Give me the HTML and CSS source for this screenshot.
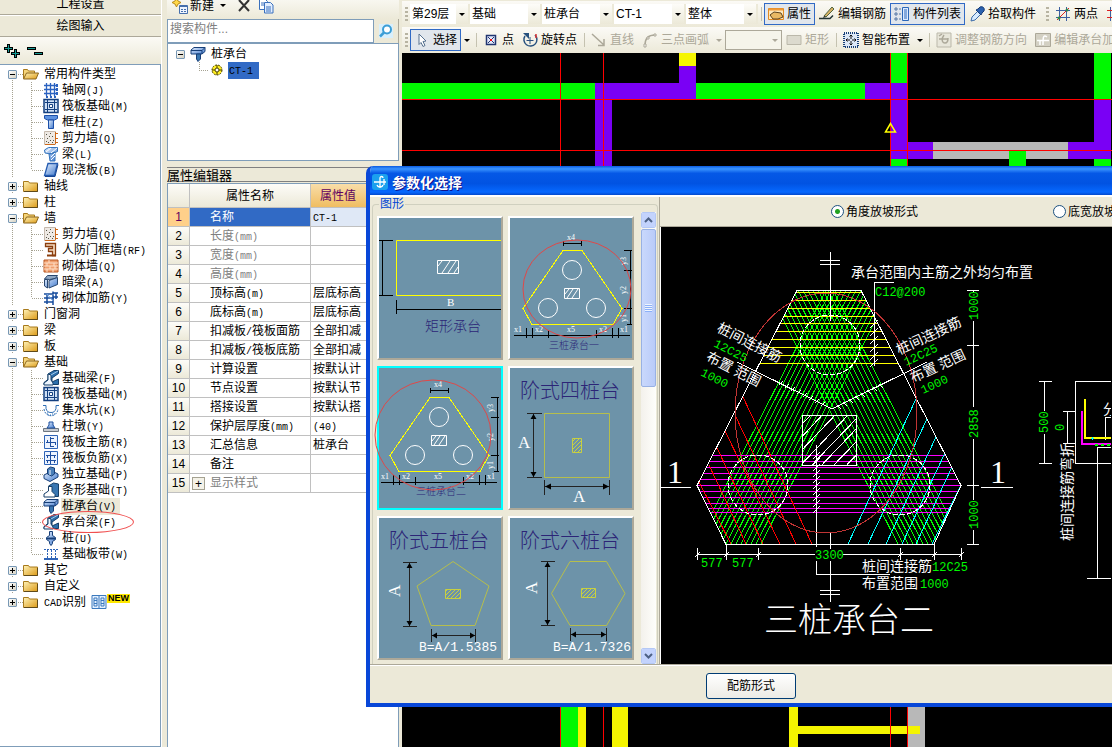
FILE: index.html
```html
<!DOCTYPE html>
<html lang="zh-CN">
<head>
    <meta charset="UTF-8">
    <meta name="viewport" content="width=device-width, initial-scale=1.0">
    <title>参数化选择</title>
    <link rel="stylesheet" href="styles.css">
</head>
<body>
    <!-- icon library -->
    <svg class="defs" aria-hidden="true">
        <defs>
            <linearGradient id="gold" x2="1" y2="1"><stop offset="0" stop-color="#fff3b8"/><stop offset="1" stop-color="#dc9a17"/></linearGradient>
            <linearGradient id="blue" x2="1" y2="1"><stop offset="0" stop-color="#e8f2ff"/><stop offset="1" stop-color="#3f78cc"/></linearGradient>
            <pattern id="hatch" width="4" height="4" patternUnits="userSpaceOnUse"><path d="M-1 5L5 -1M-1 1L1 -1M3 5L5 3" stroke="#c8d040"/></pattern>
        </defs>
        <symbol id="i-folder" viewBox="0 0 16 16"><path d="M.500 3.500h5l1 1.500h8v8.500H.500z" fill="url(#gold)" stroke="#a87a1c"/><path d="M1 13.500h13.500V6" fill="none" stroke="#5f4a1a"/></symbol>
        <symbol id="i-open" viewBox="0 0 16 16"><path d="M.500 12.500v-9h4l1 1.500h6v2" fill="#f5d479" stroke="#a87a1c"/><path d="M3.500 7h12l-2.500 6H.500z" fill="url(#gold)" stroke="#8a651d"/></symbol>
        <symbol id="i-axis" viewBox="0 0 16 16"><path d="M3.500 1v13M7.500 1v13M11.500 1v13M1 3.500h12M1 7.500h12M1 11.500h12" stroke="#2b62c0" fill="none" stroke-width="1.300"/><path d="M13 2h2v3h-2zM13 6h2v3h-2zM13 10h2v3h-2zM3 14h2v2H3zM7 14h2v2H7zM11 14h2v2h-2z" fill="#2b62c0"/></symbol>
        <symbol id="i-raft" viewBox="0 0 16 16"><path d="M1 1.500h14v13H1z" fill="#cfe0f5" stroke="#133f7f" stroke-width="1.500"/><path d="M4.500 2v12M11.500 2v12M2 4.500h12M2 11.500h12" stroke="#133f7f"/><path d="M6.500 6.500h3v3h-3z" fill="#fff" stroke="#133f7f"/></symbol>
        <symbol id="i-col" viewBox="0 0 16 16"><path d="M1.500 1.500h13v3l-3 1.500h-7l-3-1.500z" fill="#5d92e0" stroke="#1c4fa8"/><path d="M5.500 6h5v8.500h-5z" fill="url(#blue)" stroke="#1c4fa8"/></symbol>
        <symbol id="i-wall" viewBox="0 0 16 16"><path d="M1.500 1.500h11v13h-11z" fill="#eee9e4" stroke="#c5b9ad"/><path d="M3 4.500h1M7 3.500h1M9 6.500h1M4 8.500h1M7 10.500h1M3 11.500h1M10 10.500h1M9 12.500h1M5 12.500h1M6 6.500h1" stroke="#554"/><path d="M12.500 2v12M12 3.500h3M12 8.500h3M12 12.500h3M2 14.500h10" stroke="#cf6a1b" fill="none"/></symbol>
        <symbol id="i-beam" viewBox="0 0 16 16"><path d="M1.500 4l4-2.500h9v4L8 8l-6-1zM6 8l6-2v9H7z" fill="url(#blue)" stroke="#3474bd"/><path d="M3 6l5-4M8 7l6-5M8 11l4-4M8 14l4-4" stroke="#fff"/></symbol>
        <symbol id="i-slab" viewBox="0 0 16 16"><path d="M5 1.500h9.500l-3 12H1.500z" fill="url(#blue)" stroke="#245bb0" stroke-width="1.300"/><path d="M2 14.500h10l3-12" stroke="#174593" fill="none"/></symbol>
        <symbol id="i-door" viewBox="0 0 16 16"><path d="M2.500 1.500h10v12h-3v-4h-4v-3h4v-2h-7z" fill="#f3d9be" stroke="#8b3e0e" stroke-width="1.300"/><path d="M4 13.500h9" stroke="#8b3e0e" stroke-width="2"/></symbol>
        <symbol id="i-brick" viewBox="0 0 16 16"><path d="M1 2h14v12H1z" fill="#f0a070" stroke="#b95822"/><path d="M1 5h14M1 8h14M1 11h14M6 2v3M11 5v3M4 5v3M7 8v3M12 8v3M4 11v3M10 11v3" stroke="#ffe0c8"/></symbol>
        <symbol id="i-hbeam" viewBox="0 0 16 16"><path d="M1.500 5l3-3.500h10l-2 3-6 1z" fill="#8ea7c4" stroke="#28466e"/><path d="M1.500 5.500h3v8.500l-3-2zM6 6.500l8.500-3v7L6 14z" fill="url(#blue)" stroke="#28466e"/></symbol>
        <symbol id="i-mas" viewBox="0 0 16 16"><path d="M1 4h9V1.500M4 14V5M10 15V5M1 8h10M10 3h5M10 7h5M13 3v6M1 12h9" stroke="#174c9d" stroke-width="1.500" fill="none"/><path d="M4 4l6 7" stroke="#6da1e2"/></symbol>
        <symbol id="i-fbeam" viewBox="0 0 16 16"><path d="M5 4l6-3.500h4.500v3L9 8v4l6.500-3v5.500H1v-2l4-3z" fill="#2d6fab" stroke="#153f68"/><path d="M5 4l3 1v5l2 3v2H1v-2l4-3z" fill="#eef6ff" stroke="#153f68"/><path d="M8 5l7-4" stroke="#a8cdec"/></symbol>
        <symbol id="i-pit" viewBox="0 0 16 16"><path d="M0 3.500h3v3c1 3 2 4 5 4s4-1 5-4v-3h3" fill="none" stroke="#2e6eb5"/><path d="M1 7c1 9 13 9 14 0M4 11h1M7 13h1M11 12h1M9 12h1M5 13h1" fill="none" stroke="#2e6eb5" stroke-dasharray="2 1"/></symbol>
        <symbol id="i-pier" viewBox="0 0 16 16"><path d="M.500 10.500h15v3H.500z" fill="#c6cbd2" stroke="#6d7680"/><path d="M6 4h4v3l2 3H4l2-3z" fill="url(#blue)" stroke="#1d4e9c"/></symbol>
        <symbol id="i-main" viewBox="0 0 16 16"><path d="M1.500 1.500h13v13h-13z" fill="#edf4ff" stroke="#2f64b7"/><path d="M7.500 3v10M3 8.500h10M4.500 6v3M7 4.500h4M7 12.500h4M12.500 8v3" stroke="#1f4f9f"/></symbol>
        <symbol id="i-neg" viewBox="0 0 16 16"><path d="M1.500 1.500h13v13h-13z" fill="#edf4ff" stroke="#2f64b7"/><path d="M3 5.500h10M3 10.500h10M7.500 2v12M4.500 5v3M11.500 5v3M4.500 10v3M11.500 10v3" stroke="#1f4f9f"/></symbol>
        <symbol id="i-iso" viewBox="0 0 16 16"><path d="M1 9l8-4 6 3v3l-8 4.500-6-3z" fill="url(#blue)" stroke="#173f78"/><path d="M4.500 3l3-2 4 1v6l-3 2-4-2z" fill="#487eb9" stroke="#173f78"/><path d="M7 4v5" stroke="#fff"/></symbol>
        <symbol id="i-strip" viewBox="0 0 16 16"><path d="M5.500 4l5-3 5 1v12.500h-5z" fill="#3976b1" stroke="#173f68"/><path d="M5.500 4.500H9v5l3 3v2.500H1V12l4.500-3z" fill="#fff" stroke="#173f68"/></symbol>
        <symbol id="i-cap" viewBox="0 0 16 16"><path d="M1 4l3-2.500h11v4L12 8H1z" fill="url(#blue)" stroke="#173f78"/><path d="M1 4.500h11l3-3M12 4.500V8" fill="none" stroke="#173f78"/><path d="M6.500 8h4v5L8 15.500 6.500 13z" fill="#3976b1" stroke="#173f78"/></symbol>
        <symbol id="i-pile" viewBox="0 0 16 16"><path d="M6.500 1.500h3v4l3 2v2l-3 2v2L8 15.500 6.500 13.500v-2l-3-2v-2l3-2z" fill="url(#blue)" stroke="#173f78"/><path d="M4 8.500h8" stroke="#173f78" stroke-width="2"/></symbol>
        <symbol id="i-band" viewBox="0 0 16 16"><path d="M1 3.500h14" stroke="#2f64b7" stroke-dasharray="2 1"/><path d="M4.500 4v8M8.500 4v8M12.500 4v8" stroke="#2f64b7" stroke-dasharray="2 1"/><path d="M1 13h14" stroke="#2f64b7" stroke-width="2"/></symbol>
        <symbol id="i-gear" viewBox="0 0 16 16"><circle cx="8" cy="8" r="5" fill="#ffee22" stroke="#4a4100" stroke-dasharray="2 1"/><circle cx="8" cy="8" r="2" fill="#fff" stroke="#4a4100"/><path d="M8 3v3M8 10v3M3 8h3M10 8h3" stroke="#4a4100"/></symbol>
        <symbol id="i-copy" viewBox="0 0 16 16"><path d="M1.500 1.500h6l2 2v8h-8z" fill="#fff" stroke="#3a70bd"/><path d="M6.500 4.500h6l2.500 2.500v8H6.500z" fill="#e2eeff" stroke="#3a70bd"/><path d="M3 5h3M3 7h3M8 9h5M8 11h5M8 13h5" stroke="#3a70bd"/></symbol>
        <symbol id="i-new" viewBox="0 0 16 16"><path d="M4.500 0l1.500 3 3 1.500-3 1.500-1.500 3L3 6 0 4.500 3 3z" fill="#ffd84a" stroke="#b98a18"/><path d="M7.500 7.500h8v8h-8z" fill="#eef4ff" stroke="#466fac"/><path d="M8 8.500h7M9 11.500h2M12 11.500h2M9 13.500h2M12 13.500h2" stroke="#466fac"/></symbol>
        <symbol id="i-prop" viewBox="0 0 16 16"><path d="M.500 2.500h15v11H.500z" fill="#ffe9bb" stroke="#e28a22"/><path d="M1 3.500h14" stroke="#f09a37" stroke-width="2"/><path d="M2 9l4-3 7 1 2 4-5 2H5z" fill="#e9b964" stroke="#5c431e"/></symbol>
        <symbol id="i-edit" viewBox="0 0 16 16"><path d="M0 12.500h11l3-3" fill="none" stroke="#233" stroke-width="1.500"/><path d="M5 10l8-9 2 2-8 8z" fill="#d7b064" stroke="#52663f"/><path d="M4 12l1-2 2 1z" fill="#222"/></symbol>
        <symbol id="i-list" viewBox="0 0 16 16"><path d="M1 2h2v2H1zM1 7h2v2H1zM1 12h2v2H1z" fill="none" stroke="#5476a5"/><path d="M5 3h2M5 8h2M5 13h2" stroke="#5476a5"/><path d="M8.500 1.500h6v13h-6z" fill="#dceaff" stroke="#2b67b9"/><path d="M10 4h3M10 6h3M10 8h3M10 10h3M10 12h3" stroke="#2b67b9"/></symbol>
        <symbol id="i-pick" viewBox="0 0 16 16"><path d="M2 15l1-4 6-6 3 3-6 6z" fill="#d7ebff" stroke="#3d6ca8"/><path d="M7 4l5 5 1-2 2-2c1-3-1-5-4-4L9 3z" fill="#2c62ae" stroke="#173b77"/></symbol>
        <symbol id="i-two" viewBox="0 0 16 16"><path d="M4.500 1v14M11.500 1v14M1 4.500h14M1 11.500h14" stroke="#3c5fa0"/><path d="M2 14L14 2" stroke="#d22"/><circle cx="4" cy="12" r="1.500" fill="#384"/><circle cx="12" cy="4" r="1.500" fill="#384"/></symbol>
        <symbol id="i-par" viewBox="0 0 16 16"><path d="M4.500 1v14M11.500 1v14" stroke="#3c5fa0"/><path d="M1 4.500h14M1 11.500h14" stroke="#d22"/></symbol>
        <symbol id="i-arrow" viewBox="0 0 16 16"><path d="M5 2l7 7-3 .500 2 4-2 1-2-4-2 2z" fill="#fff" stroke="#56718f"/></symbol>
        <symbol id="i-point" viewBox="0 0 16 16"><path d="M3.500 3.500h9v9h-9z" fill="#e2e8fb" stroke="#21356f" stroke-width="1.500"/><path d="M5 5l6 6M11 5l-6 6" stroke="#21356f"/><path d="M7 7h2v2H7z" fill="#e11"/></symbol>
        <symbol id="i-rotate" viewBox="0 0 16 16"><path d="M3 4a6.500 6.500 0 1 0 10-1" fill="none" stroke="#27517e" stroke-width="1.500"/><path d="M1 1h6v6z" fill="#27517e"/><path d="M8 5v7M4.500 8.500h7" stroke="#27517e"/><path d="M14 2v4" stroke="#d33" stroke-width="1.500"/></symbol>
        <symbol id="i-line" viewBox="0 0 16 16"><path d="M1 2l12 11M13 7v6.500H7" fill="none" stroke="#aca899" stroke-width="1.500"/></symbol>
        <symbol id="i-arc" viewBox="0 0 16 16"><path d="M3 13C3 6 6 3 13 3" fill="none" stroke="#aca899" stroke-width="1.500"/><path d="M2 12h2v3H2zM5 5h2v2H5zM12 2h2v2h-2z" fill="#fff" stroke="#aca899"/></symbol>
        <symbol id="i-rect" viewBox="0 0 16 16"><path d="M1 3.500h14v9H1z" fill="#dcdace" stroke="#bbb8aa"/></symbol>
        <symbol id="i-smart" viewBox="0 0 16 16"><path d="M1 1h14v14H1z" fill="#dce8f7" stroke="#173f78" stroke-dasharray="1 1" stroke-width="2"/><path d="M8 3v4M8 9v4M3 8h4M9 8h4M6.500 4.500L8 3l1.500 1.500M6.500 11.500L8 13l1.500-1.500M4.500 6.500L3 8l1.500 1.500M11.500 6.500L13 8l-1.500 1.500" fill="none" stroke="#111"/></symbol>
        <symbol id="i-dir" viewBox="0 0 16 16"><path d="M1 1h14v14H1z" fill="#e8e6da" stroke="#bbb8aa"/><path d="M3 7h9M8 3c-3 4-2 8 1 8s3-3 3-5M3 4l3-2" fill="none" stroke="#aca899" stroke-width="1.500"/></symbol>
        <symbol id="i-capbar" viewBox="0 0 16 16"><path d="M.500 1.500h15v13H.500z" fill="#d3d0c3" stroke="#aca899"/><path d="M2 8.500h12M5 13V8M12 5c-4-3-4 1-4 8" fill="none" stroke="#fff" stroke-width="1.500"/></symbol>
    </svg>

    <div class="app">
        <aside class="sidebar">
            <button class="bar-btn first">工程设置</button>
            <button class="bar-btn">绘图输入</button>
            <div class="fold-tools">
                <button aria-label="全部展开"><svg width="16" height="14"><path d="M0 4.500h9M4.500 0v9M7 9.500h9M11.500 5v9" stroke="#000" stroke-width="3"/><path d="M1 4.500h7M4.500 1v7M8 9.500h7M11.500 6v7" stroke="#169a92"/></svg></button>
                <button aria-label="全部折叠"><svg width="16" height="14"><path d="M0 4.500h9M7 9.500h9" stroke="#000" stroke-width="3"/><path d="M1 4.500h7M8 9.500h7" stroke="#169a92"/></svg></button>
            </div>
            <ul class="tree">
                <li><div class="row"><button class="toggle minus" aria-label="折叠"></button><svg><use href="#i-open"/></svg>常用构件类型</div>
                    <ul>
                        <li><svg><use href="#i-axis"/></svg><span>轴网<i>(J)</i></span></li>
                        <li><svg><use href="#i-raft"/></svg><span>筏板基础<i>(M)</i></span></li>
                        <li><svg><use href="#i-col"/></svg><span>框柱<i>(Z)</i></span></li>
                        <li><svg><use href="#i-wall"/></svg><span>剪力墙<i>(Q)</i></span></li>
                        <li><svg><use href="#i-beam"/></svg><span>梁<i>(L)</i></span></li>
                        <li><svg><use href="#i-slab"/></svg><span>现浇板<i>(B)</i></span></li>
                    </ul>
                </li>
                <li><div class="row"><button class="toggle" aria-label="展开"></button><svg><use href="#i-folder"/></svg>轴线</div></li>
                <li><div class="row"><button class="toggle" aria-label="展开"></button><svg><use href="#i-folder"/></svg>柱</div></li>
                <li><div class="row"><button class="toggle minus" aria-label="折叠"></button><svg><use href="#i-open"/></svg>墙</div>
                    <ul>
                        <li><svg><use href="#i-wall"/></svg><span>剪力墙<i>(Q)</i></span></li>
                        <li><svg><use href="#i-door"/></svg><span>人防门框墙<i>(RF)</i></span></li>
                        <li><svg><use href="#i-brick"/></svg><span>砌体墙<i>(Q)</i></span></li>
                        <li><svg><use href="#i-hbeam"/></svg><span>暗梁<i>(A)</i></span></li>
                        <li><svg><use href="#i-mas"/></svg><span>砌体加筋<i>(Y)</i></span></li>
                    </ul>
                </li>
                <li><div class="row"><button class="toggle" aria-label="展开"></button><svg><use href="#i-folder"/></svg>门窗洞</div></li>
                <li><div class="row"><button class="toggle" aria-label="展开"></button><svg><use href="#i-folder"/></svg>梁</div></li>
                <li><div class="row"><button class="toggle" aria-label="展开"></button><svg><use href="#i-folder"/></svg>板</div></li>
                <li><div class="row"><button class="toggle minus" aria-label="折叠"></button><svg><use href="#i-open"/></svg>基础</div>
                    <ul>
                        <li><svg><use href="#i-fbeam"/></svg><span>基础梁<i>(F)</i></span></li>
                        <li><svg><use href="#i-raft"/></svg><span>筏板基础<i>(M)</i></span></li>
                        <li><svg><use href="#i-pit"/></svg><span>集水坑<i>(K)</i></span></li>
                        <li><svg><use href="#i-pier"/></svg><span>柱墩<i>(Y)</i></span></li>
                        <li><svg><use href="#i-main"/></svg><span>筏板主筋<i>(R)</i></span></li>
                        <li><svg><use href="#i-neg"/></svg><span>筏板负筋<i>(X)</i></span></li>
                        <li><svg><use href="#i-iso"/></svg><span>独立基础<i>(P)</i></span></li>
                        <li><svg><use href="#i-strip"/></svg><span>条形基础<i>(T)</i></span></li>
                        <li><svg><use href="#i-cap"/></svg><span class="current">桩承台<i>(V)</i></span></li>
                        <li class="marked"><svg><use href="#i-fbeam"/></svg><span>承台梁<i>(F)</i></span></li>
                        <li><svg><use href="#i-pile"/></svg><span>桩<i>(U)</i></span></li>
                        <li><svg><use href="#i-band"/></svg><span>基础板带<i>(W)</i></span></li>
                    </ul>
                </li>
                <li><div class="row"><button class="toggle" aria-label="展开"></button><svg><use href="#i-folder"/></svg>其它</div></li>
                <li><div class="row"><button class="toggle" aria-label="展开"></button><svg><use href="#i-folder"/></svg>自定义</div></li>
                <li><div class="row"><button class="toggle" aria-label="展开"></button><svg><use href="#i-folder"/></svg><span><i>CAD</i>识别</span><svg viewBox="0 0 16 16"><path d="M1 1.500h14v13H1zM8 2v12" fill="#e3f0ff" stroke="#3b79bd"/><path d="M3 4h3v8H3zM10 4h3v8h-3zM3 6.500h3M3 9.500h3M10 6.500h3M10 9.500h3" fill="none" stroke="#3b79bd"/></svg><b class="new">NEW</b></div></li>
            </ul>
        </aside>

        <section class="middle">
            <div class="mid-tools">
                <button><svg><use href="#i-new"/></svg>新建<span class="caret"></span></button>
                <button aria-label="删除"><svg viewBox="0 0 16 16"><path d="M3 2l10 11M13 2L3 13" stroke="#333" stroke-width="2"/></svg></button>
                <button aria-label="复制"><svg><use href="#i-copy"/></svg></button>
            </div>
            <div class="search">
                <input type="text" placeholder="搜索构件..." aria-label="搜索构件">
                <button aria-label="搜索"><svg viewBox="0 0 16 16"><path d="M1 1h14v14H1z" fill="#d8effc"/><circle cx="9" cy="6.500" r="4" fill="#fff" stroke="#3c9ed6" stroke-width="2"/><path d="M6 9.500l-4 4" stroke="#3c9ed6" stroke-width="2.500"/></svg></button>
            </div>
            <ul class="parts">
                <li><button class="toggle minus" aria-label="折叠"></button><svg><use href="#i-cap"/></svg>桩承台</li>
                <li class="part"><svg><use href="#i-gear"/></svg><span><i>CT-1</i></span></li>
            </ul>
            <h2>属性编辑器</h2>
            <div class="grid-box">
                <table>
                    <thead>
                        <tr><th class="num"></th><th class="name">属性名称</th><th class="val">属性值</th></tr>
                    </thead>
                    <tbody>
                        <tr class="sel"><th>1</th><td>名称</td><td><i>CT-1</i></td></tr>
                        <tr class="off"><th>2</th><td>长度<i>(mm)</i></td><td></td></tr>
                        <tr class="off"><th>3</th><td>宽度<i>(mm)</i></td><td></td></tr>
                        <tr class="off"><th>4</th><td>高度<i>(mm)</i></td><td></td></tr>
                        <tr><th>5</th><td>顶标高<i>(m)</i></td><td>层底标高</td></tr>
                        <tr><th>6</th><td>底标高<i>(m)</i></td><td>层底标高</td></tr>
                        <tr><th>7</th><td>扣减板<i>/</i>筏板面筋</td><td>全部扣减</td></tr>
                        <tr><th>8</th><td>扣减板<i>/</i>筏板底筋</td><td>全部扣减</td></tr>
                        <tr><th>9</th><td>计算设置</td><td>按默认计</td></tr>
                        <tr><th>10</th><td>节点设置</td><td>按默认节</td></tr>
                        <tr><th>11</th><td>搭接设置</td><td>按默认搭</td></tr>
                        <tr><th>12</th><td>保护层厚度<i>(mm)</i></td><td><i>(40)</i></td></tr>
                        <tr><th>13</th><td>汇总信息</td><td>桩承台</td></tr>
                        <tr><th>14</th><td>备注</td><td></td></tr>
                        <tr class="off more"><th>15</th><td><button aria-label="展开显示样式">+</button>显示样式</td><td></td></tr>
                    </tbody>
                </table>
            </div>
        </section>

        <main class="work">
            <div class="toolbar">
                <span class="grip"></span>
                <span class="combo short"><select aria-label="楼层"><option>第29层</option></select></span>
                <span class="combo"><select aria-label="类别"><option>基础</option></select></span>
                <span class="combo"><select aria-label="构件类型"><option>桩承台</option></select></span>
                <span class="combo"><select aria-label="构件"><option>CT-1</option></select></span>
                <span class="combo"><select aria-label="范围"><option>整体</option></select></span>
                <span class="sep"></span>
                <button class="on"><svg><use href="#i-prop"/></svg>属性</button>
                <button><svg><use href="#i-edit"/></svg>编辑钢筋</button>
                <button class="on"><svg><use href="#i-list"/></svg>构件列表</button>
                <button><svg><use href="#i-pick"/></svg>拾取构件</button>
                <span class="grip"></span>
                <button><svg><use href="#i-two"/></svg>两点</button>
                <button aria-label="平行"><svg><use href="#i-par"/></svg></button>
            </div>
            <div class="toolbar">
                <span class="grip"></span>
                <button class="on"><svg><use href="#i-arrow"/></svg>选择</button>
                <button class="drop" aria-label="选择方式"><span class="caret"></span></button>
                <span class="sep"></span>
                <button><svg><use href="#i-point"/></svg>点</button>
                <button><svg><use href="#i-rotate"/></svg>旋转点</button>
                <span class="sep"></span>
                <button disabled><svg><use href="#i-line"/></svg>直线</button>
                <button disabled><svg><use href="#i-arc"/></svg>三点画弧</button>
                <button class="drop" disabled aria-label="画弧方式"><span class="caret"></span></button>
                <span class="combo short off"><select disabled aria-label="半径"><option></option></select></span>
                <button disabled><svg><use href="#i-rect"/></svg>矩形</button>
                <span class="sep"></span>
                <button><svg><use href="#i-smart"/></svg>智能布置</button>
                <button class="drop" aria-label="布置方式"><span class="caret"></span></button>
                <span class="sep"></span>
                <button disabled><svg><use href="#i-dir"/></svg>调整钢筋方向</button>
                <button disabled><svg><use href="#i-capbar"/></svg>编辑承台加筋</button>
            </div>
            <div class="canvas">
                <svg width="710" height="694" viewBox="402 53 710 694" shape-rendering="crispEdges">
                    <path fill="#00f800" d="M402 83h193v16H402zM696 83h169v16H696zM891 53h16v30h-16zM891 159h16v20h-16zM1094 53h17v46h-17zM1094 159h17v20h-17zM561 690h17v57h-17z"/>
                    <path fill="#b8b8b8" d="M933 142h135v17H933zM907 690h18v57h-18z"/>
                    <path fill="#00f800" d="M1009 151h17v20h-17z"/>
                    <path fill="#7a00f5" d="M679 66h17v33h-84v80h-17V83h84zM865 83h42v59h26v17h-42V99h-26zM1094 99h17v60h-43v-17h26z"/>
                    <path fill="#f5f500" d="M679 53h17v13h-17zM578 690h8v57h-8zM612 690h16v57h-16zM789 690h9v36h122v8H798v13h-9z"/>
                    <path stroke="#f00" d="M560.500 53v694M603.500 53v694M890.500 53v694M907.500 53v694M402 99.500h710M402 150.500h710"/>
                    <path stroke="#ff0" fill="none" d="M890.500 123.500l-5 8.500h10z" stroke-width="1.500" shape-rendering="auto"/>
                </svg>
            </div>
        </main>
    </div>

    <div class="dialog" role="dialog" aria-labelledby="dialog-title">
        <header>
            <svg width="16" height="16" viewBox="0 0 16 16"><rect width="16" height="16" rx="3" fill="#1ba0ee"/><path d="M2 8h12M8 4v9M5 11c1 3 5 3 6 0M8 4c0-2 3-2 3 0M12 5v6" fill="none" stroke="#fff" stroke-width="1.300"/></svg>
            <h1 id="dialog-title">参数化选择</h1>
        </header>
        <div class="dialog-body">
            <fieldset>
                <legend>图形</legend>
                <div class="picker">
                    <div class="thumbs">
                        <button class="thumb" aria-label="矩形承台">
                            <svg width="122" height="140">
                                <path d="M17.500 22.500h110v55h-110z" fill="none" stroke="#ff0"/>
                                <path d="M0 22.500h14M0 77.500h14M3.500 22v55M17.500 82v14M17.500 91.500H122" stroke="#000"/>
                                <path d="M58.500 42.500h21v13h-21zM59 48l4-5M63 55l8-12M69 55l8-12M75 55l4-6" fill="none" stroke="#fff"/>
                                <text x="68" y="88" class="dim">B</text>
                                <text x="46" y="113" class="cap14">矩形承台</text>
                            </svg>
                        </button>
                        <button class="thumb" aria-label="三桩承台一">
                            <svg width="122" height="140">
                                <g id="three">
                                    <path d="M53 32.500h19l40 58-9 16H22l-9-16z" fill="none" stroke="#ff0" shape-rendering="crispEdges"/>
                                    <g fill="none" stroke="#fff"><circle cx="62" cy="52" r="9.500"/><circle cx="38" cy="90" r="9.500"/><circle cx="86" cy="90" r="9.500"/><path d="M54.500 70.500h15v10h-15zM55 76l4-5M57 80l6-9M62 80l6-9"/></g>
                                    <path d="M53 25.500h19M53.500 23v5M71.500 23v5M120.500 32v74M114 32.500h8M114 52.500h8M114 90.500h8M117 106.500h5M4 117.500h116M16.500 110v10M22.500 110v10M38.500 112v8M86.500 112v8M102.500 110v10M108.500 110v10" stroke="#000" shape-rendering="crispEdges"/>
                                    <g class="tiny"><text x="57" y="22">x4</text><text x="4" y="114">x1</text><text x="25" y="114">x2</text><text x="57" y="114">x5</text><text x="89" y="114">x2</text><text x="110" y="114">x1</text><text transform="translate(116 47) rotate(-90)">y3</text><text transform="translate(116 76) rotate(-90)">y2</text><text transform="translate(116 104) rotate(-90)">y1</text></g>
                                </g>
                                <text x="39" y="131" class="cap10">三桩承台一</text>
                                <ellipse cx="67" cy="71" rx="54" ry="49" class="mark"/>
                            </svg>
                        </button>
                        <button class="thumb chosen" aria-label="三桩承台二">
                            <svg width="122" height="140">
                                <use href="#three" x="-2" y="-3"/>
                                <text x="37" y="127" class="cap10">三桩承台二</text>
                                <ellipse cx="54" cy="67" rx="58" ry="55" class="mark"/>
                            </svg>
                        </button>
                        <button class="thumb" aria-label="阶式四桩台">
                            <svg width="122" height="140">
                                <text x="10" y="30" class="cap20">阶式四桩台</text>
                                <path d="M34.500 45.500h65v64h-65z" class="olive"/><path d="M62.500 70.500h9v14h-9z" class="olive hatched"/>
                                <path d="M17 45.500h15M17 109.500h15M23.500 46v63M34.500 112v15M99.500 112v15M35 118.500h64" stroke="#222"/>
                                <path d="M23.500 46l3 5h-6zM23.500 109l3-5h-6zM35 118.500l6-3v6zM99 118.500l-6-3v6z"/>
                                <text x="8" y="80" class="dim big">A</text><text x="63" y="134" class="dim big">A</text>
                            </svg>
                        </button>
                        <button class="thumb" aria-label="阶式五桩台">
                            <svg width="122" height="140">
                                <text x="10" y="30" class="cap20">阶式五桩台</text>
                                <path d="M74 43.500l36 24.500-14 39.500H52L38 68z" class="olive"/><path d="M66.500 71.500h15v9h-15z" class="olive hatched"/>
                                <path d="M24 44.500h14M24 108.500h14M30.500 45v63M52.500 111v13M96.500 111v13M53 117.500h43" stroke="#222"/>
                                <path d="M30.500 45l3 5h-6zM30.500 108l3-5h-6zM53 117.500l5-3v6zM96 117.500l-5-3v6z"/>
                                <text transform="translate(21 79) rotate(-90)" class="dim big">A</text>
                                <text x="40" y="133" class="formula">B=A/1.5385</text>
                            </svg>
                        </button>
                        <button class="thumb" aria-label="阶式六桩台">
                            <svg width="122" height="140">
                                <text x="10" y="30" class="cap20">阶式六桩台</text>
                                <path d="M60 43.500h36.500l18.500 32-18.500 32H60l-18.500-32z" class="olive"/><path d="M71.500 70.500h14v9h-14z" class="olive hatched"/>
                                <path d="M31 43.500h14M31 107.500h14M37.500 44v63M60.500 110v13M96.500 110v13M61 116.500h35" stroke="#222"/>
                                <path d="M37.500 44l3 5h-6zM37.500 107l3-5h-6zM61 116.500l5-3v6zM96 116.500l-5-3v6z"/>
                                <text transform="translate(27 76) rotate(-90)" class="dim big">A</text>
                                <text x="43" y="133" class="formula">B=A/1.7326</text>
                            </svg>
                        </button>
                    </div>
                    <div class="scroll">
                        <button aria-label="向上"><svg width="9" height="6"><path d="M1 5l3.500-3.500L8 5" fill="none" stroke="#4d6185" stroke-width="2"/></svg></button>
                        <div class="handle"></div>
                        <button class="down" aria-label="向下"><svg width="9" height="6"><path d="M1 1l3.500 3.500L8 1" fill="none" stroke="#4d6185" stroke-width="2"/></svg></button>
                    </div>
                </div>
            </fieldset>
            <div class="preview">
                <div class="modes">
                    <label><input type="radio" name="slope" checked>角度放坡形式</label>
                    <label><input type="radio" name="slope">底宽放坡形式</label>
                </div>
                <div class="drawing">
                    <svg width="451" height="437" viewBox="661 227 451 437">
                        <defs>
                            <clipPath id="outline"><path d="M798 290h64l100 195-27 59H727l-29-59z"/></clipPath>
                            <clipPath id="column"><path d="M803 415h54v50h-54z"/></clipPath>
                        </defs>
                        <g clip-path="url(#outline)" fill="none">
                            <!-- bars between piles -->
                            <path id="bars" stroke="#00ff00" d="M827 290l-130 254M832 290l-130 254M837 290l-130 254M842 290l-130 254M847 290l-130 254M852 290l-130 254M857 290l-130 254M862 290l-130 254M867 290l-130 254M872 290l-130 254M877 290l-130 254M882 290l-130 254M887 290l-130 254M892 290l-130 254"/>
                            <use href="#bars" transform="translate(1661) scale(-1 1)"/>
                            <path stroke="#f0f" d="M690 455.500h280M690 461.500h280M690 467.500h280M690 473.500h280M690 479.500h280M690 485.500h280M690 491.500h280M690 497.500h280M690 503.500h280M690 508.500h280M690 512.500h280"/>
                            <path stroke="#ff0" d="M740 292.500h180M740 300.500h180M740 308.500h180M740 316.500h180M740 323.500h180M740 331.500h180M740 339.500h180M740 347.500h180M740 355.500h180M740 363.500h180"/>
                            <path stroke="red" d="M744 397l69 147M736 415l61 129M726 431l55 113M718 448l46 96M710 465l37 79M700 482l32 62"/>
                            <path stroke="#0ff" d="M917 399l-68 145M928 419l-59 125M937 437l-50 107M946 453l-43 91M953 467l-36 77M962 485l-29 59"/>
                        </g>
                        <g fill="none" stroke="#fff">
                            <path d="M798 290.500h64l100 195-27 59H727l-29-59z"/>
                            <g stroke-dasharray="5 2"><circle cx="831" cy="345" r="30"/><circle cx="759" cy="485" r="30"/><circle cx="901" cy="485" r="30"/></g>
                            <path d="M803.500 415.500h54v50h-54z"/>
                            <path clip-path="url(#column)" d="M800 427l14-14M800 440l26-28M800 453l40-42M800 467l50-53M808 470l52-54M818 470l42-44M830 470l30-31M843 470l20-21"/>
                            <path d="M738 362l95 47 95-47"/>
                            <path d="M780 385l4-4M786 388l4-4M792 391l4-4M798 394l4-4M804 397l4-4M810 400l4-4M816 403l4-4M822 406l4-4M838 405l4 4M844 402l4 4M850 399l4 4M856 396l4 4M862 393l4 4M868 390l4 4M874 387l4 4M880 384l4 4"/>
                            <path d="M831.500 252v69M821 260.500h20M821 264.500h20M831.500 533v16M831.500 561v41M821 590.500h20M821 594.500h20"/>
                            <path d="M895 282.500h-19.500V366M817.500 445v102M817.500 561v13.500H891"/>
                            <path d="M871 328l8-8M871 336l8-8M871 344l8-8M871 352l8-8M871 360l8-8M871 367l8-8M814 459l7-7M814 465l7-7M814 471l7-7M814 477l7-7M814 483l7-7M814 489l7-7M814 495l7-7M814 501l7-7M814 507l7-7M814 513l7-7"/>
                            <path d="M698 554.500h118M844 554.500h118M698.500 548v12M727.500 544v16M759.500 548v12M901.500 548v12M935.500 544v16M962.500 548v12M696 557l5-5M725 557l5-5M757 557l5-5M899 557l5-5M933 557l5-5M960 557l5-5"/>
                            <path d="M974.500 290v2M974.500 321v86M974.500 439v61M974.500 530v15M968 290.500h12M968 345.500h12M968 485.500h12M968 544.500h12"/>
                            <path d="M661 487.500h31M982 487.500h32M661.500 227v437"/>
                            <path d="M1045.500 381v30M1045.500 434v30M1040 381.500h13M1040 463.500h13M1112 381.500h-35.500v82h40M1068.500 411v33M1064 411.500h12M1064 443.500h12M1106.500 440v-22.500h8M1098.500 578V447.500h20M1088 578.500h24"/>
                        </g>
                        <path d="M1082.500 411v32.500H1112" fill="none" stroke="#f0f" stroke-width="2"/>
                        <path d="M1086 399v38.500h26" fill="none" stroke="#ff0" stroke-width="2"/>
                        <path d="M1093 437v3M1092 438.500h3" stroke="#0ff"/><path d="M1096 444.500h3M1102 444.500h3M1108 444.500h3" stroke="#0f0" stroke-width="2"/>
                        <ellipse cx="827" cy="413" rx="91" ry="120" class="mark dark"/>
                        <g class="note">
                            <text x="852" y="277">承台范围内主筋之外均匀布置</text>
                            <text x="863" y="571">桩间连接筋</text><text x="863" y="588">布置范围</text>
                            <text transform="translate(717 331) rotate(27)">桩间连接筋</text><text transform="translate(706 360) rotate(27)">布置 范围</text>
                            <text transform="translate(900 355) rotate(-25)">桩间连接筋</text><text transform="translate(914 383) rotate(-25)">布置 范围</text>
                            <text transform="translate(1073 541) rotate(-90)">桩间连接筋弯折</text>
                            <text x="1104" y="414">分布筋</text>
                        </g>
                        <g class="measure">
                            <text x="876" y="296">C12@200</text>
                            <text x="933" y="571">12C25</text><text x="921" y="588">1000</text>
                            <text x="702" y="567">577</text><text x="733" y="567">577</text><text x="816" y="559">3300</text>
                            <text transform="translate(714 346) rotate(27)">12C25</text><text transform="translate(701 375) rotate(27)">1000</text>
                            <text transform="translate(907 366) rotate(-25)">12C25</text><text transform="translate(924 394) rotate(-25)">1000</text>
                            <text transform="translate(979 320) rotate(-90)">1000</text><text transform="translate(979 438) rotate(-90)">2858</text><text transform="translate(979 529) rotate(-90)">1000</text>
                            <text transform="translate(1049 433) rotate(-90)">500</text><text transform="translate(1065 431) rotate(-90)">0</text>
                        </g>
                        <g class="section-no"><text x="668" y="483">1</text><text x="991" y="483">1</text></g>
                        <text x="765" y="632" class="big-title">三桩承台二</text>
                    </svg>
                </div>
            </div>
        </div>
        <footer><button>配筋形式</button></footer>
    </div>
</body>
</html>
```
FILE: styles.css
```css
* {
    box-sizing: border-box;
}

body {
    margin: 0;
    height: 100vh;
    overflow: hidden;
    position: relative;
    background: #ece9d8;
    color: #000;
    font: 12px/16px "Liberation Sans", "Noto Sans CJK SC", sans-serif;
}

button, input, select {
    font: inherit;
    color: inherit;
    margin: 0;
}

button {
    display: flex;
    align-items: center;
    padding: 0;
    border: 0;
    background: none;
    white-space: nowrap;
}

ul {
    list-style: none;
    margin: 0;
    padding: 0;
}

i {
    font: 10px/14px "Liberation Mono", monospace;
}

.defs {
    position: absolute;
    width: 0;
    height: 0;
}

.app {
    display: flex;
    height: 100%;
}

.app svg:not([width]) {
    width: 16px;
    height: 16px;
    flex: none;
}

/* left navigation */
.sidebar {
    flex: none;
    width: 162px;
    display: flex;
    flex-direction: column;
    border-right: 1px solid #fff;
}

.bar-btn {
    flex: none;
    height: 22px;
    justify-content: center;
    border-top: 1px solid #fff;
    border-bottom: 1px solid #aca899;
}

.bar-btn.first {
    height: 15px;
    border-top: 0;
    padding-bottom: 6px;
}

.fold-tools {
    flex: none;
    height: 27px;
    display: flex;
    gap: 7px;
    padding-left: 4px;
    background: linear-gradient(#fbfaf5, #ece9d8);
}

.tree {
    flex: 1;
    padding-top: 1px;
    background: #fff;
    border: 1px solid #7f9db9;
    border-left: 0;
    overflow: hidden;
}

.tree > li {
    background: repeating-linear-gradient(#a5a291 0 1px, transparent 1px 2px) 12px 8px / 1px 100% no-repeat;
}

.tree > li:last-child {
    background: none;
}

.row {
    display: flex;
    align-items: center;
    gap: 5px;
    height: 16px;
    padding-left: 8px;
    white-space: nowrap;
    background: repeating-linear-gradient(90deg, #a5a291 0 1px, transparent 1px 2px) 18px 8px / 5px 1px no-repeat;
}

.row .toggle {
    margin-right: 1px;
}

.toggle {
    flex: none;
    width: 9px;
    height: 9px;
    border: 1px solid #7898b5;
    border-radius: 1px;
    background: linear-gradient(#000, #000) center / 5px 1px no-repeat, linear-gradient(#000, #000) center / 1px 5px no-repeat, linear-gradient(135deg, #fff, #d6d2c2);
}

.toggle.minus {
    background: linear-gradient(#000, #000) center / 5px 1px no-repeat, linear-gradient(135deg, #fff, #d6d2c2);
}

.tree ul {
    background: repeating-linear-gradient(#a5a291 0 1px, transparent 1px 2px) 31px 0 / 1px calc(100% - 8px) no-repeat;
}

.tree ul li {
    display: flex;
    align-items: center;
    gap: 2px;
    height: 16px;
    padding-left: 43px;
    white-space: nowrap;
    position: relative;
    background: repeating-linear-gradient(90deg, #a5a291 0 1px, transparent 1px 2px) 32px 8px / 11px 1px no-repeat;
}

.tree ul span {
    padding: 0 4px 0 1px;
}

.tree .current {
    background: #ece9d8;
}

.marked::after {
    content: "";
    position: absolute;
    left: 42px;
    top: -3px;
    width: 90px;
    height: 20px;
    border: 1px solid #f05050;
    border-radius: 50%;
}

.new {
    align-self: flex-start;
    height: 9px;
    padding: 0 1px;
    background: #ffe800;
    font: bold 9px/9px "Liberation Sans", sans-serif;
}

.row svg + .new {
    margin-left: -5px;
}

/* component list and properties */
.middle {
    flex: none;
    width: 240px;
    padding: 0 3px 0 5px;
    display: flex;
    flex-direction: column;
}

.mid-tools {
    display: flex;
    gap: 6px;
    height: 19px;
    padding: 0 0 8px 5px;
    background: linear-gradient(#f8f7f0, #ece9d8);
}

.mid-tools button {
    gap: 2px;
}

.caret {
    flex: none;
    border: 3px solid transparent;
    border-top-color: #000;
    border-bottom: 0;
    margin: 0 4px;
}

:disabled .caret {
    border-top-color: #aca899;
}

.search {
    display: flex;
    height: 24px;
}

.search input {
    width: 0;
    flex: 1;
    padding: 0 2px 4px;
    border: 1px solid #7f9db9;
    background: #fff;
}

.search input::placeholder {
    color: #808080;
}

.search button {
    width: 25px;
    justify-content: center;
    border-right: 1px solid #aca899;
}

.parts {
    height: 118px;
    padding: 2px 0 0 8px;
    border: 1px solid #7f9db9;
    background: #fff;
}

.parts li {
    display: flex;
    align-items: center;
    gap: 5px;
    height: 16px;
}

.parts li.part {
    padding-left: 33px;
    gap: 3px;
    background: repeating-linear-gradient(#a5a291 0 1px, transparent 1px 2px) 23px 0 / 1px 8px no-repeat, repeating-linear-gradient(90deg, #a5a291 0 1px, transparent 1px 2px) 23px 8px / 10px 1px no-repeat;
}

.parts span {
    padding: 0 6px 0 1px;
    background: #316ac5;
}

.middle h2 {
    margin: 6px 0 1px;
    font: 13px/13px "Noto Sans CJK SC", sans-serif;
    border-top: 1px solid #808080;
    border-bottom: 1px solid #808080;
    height: 15px;
}

.grid-box {
    flex: 1;
    background: #fff;
    border: 1px solid #7f9db9;
    border-bottom: 0;
}

table {
    width: 100%;
    table-layout: fixed;
    border-collapse: separate;
    border-spacing: 0;
}

th, td {
    height: 19px;
    padding: 0;
    border-right: 1px solid #c0c0c0;
    border-bottom: 1px solid #c0c0c0;
    font-weight: normal;
    line-height: 16px;
    text-align: left;
    white-space: nowrap;
    overflow: hidden;
}

th {
    text-align: center;
    background: linear-gradient(#fdfcf8, #ece9d8);
}

thead th {
    height: 24px;
}

.num {
    width: 22px;
}

.name {
    width: 121px;
}

.val {
    padding-right: 32px;
    background: linear-gradient(#f8dda9, #f0bd61);
    color: #600060;
}

td:nth-child(2) {
    padding-left: 20px;
}

td:nth-child(3) {
    padding-left: 2px;
}

.sel th {
    background: #ffd08a;
    color: #600060;
}

.sel td {
    background: #dfe8f6;
}

.sel td:nth-child(2) {
    background: #316ac5;
    color: #fff;
}

.off td {
    color: #808080;
}

.more td:nth-child(2) {
    padding-left: 2px;
}

.more button {
    display: inline-block;
    width: 13px;
    height: 13px;
    margin-right: 5px;
    border: 1px solid #a5a291;
    background: #f4f2e8;
    color: #000;
    line-height: 10px;
    vertical-align: middle;
}

/* toolbars and canvas */
.work {
    flex: 1;
    min-width: 0;
    display: flex;
    flex-direction: column;
    padding-top: 1px;
    overflow: hidden;
}

.toolbar {
    flex: none;
    display: flex;
    align-items: center;
    height: 26px;
    background: linear-gradient(#fbfaf6, #ece9d8);
}

.grip {
    flex: none;
    width: 3px;
    height: 14px;
    margin: 0 2px 0 3px;
    background: repeating-linear-gradient(#b8b4a2 0 2px, transparent 2px 4px);
}

.toolbar button + .grip {
    margin: 0 2px 0 6px;
}

.toolbar button {
    flex: none;
    height: 22px;
    gap: 3px;
    padding: 0 3px;
    border: 1px solid transparent;
}

.toolbar button.on {
    border-color: #316ac5;
    background: #e1e6ec;
}

.toolbar button:disabled {
    color: #aca899;
}

.toolbar .drop {
    width: 12px;
    padding: 0;
    border: 0;
    justify-content: center;
}

.sep {
    flex: none;
    width: 6px;
    height: 14px;
    background: linear-gradient(#c5c2b0, #c5c2b0) center / 1px 100% no-repeat;
}

.combo {
    flex: none;
    width: 72px;
    height: 20px;
    display: flex;
    align-items: center;
    border-right: 2px solid #ece9d8;
    background: linear-gradient(#fdfcf8, #ece9d8) right / 12px 100% no-repeat, #fff;
}

.combo.short {
    width: 60px;
}

.combo::after {
    content: "";
    border: 3px solid transparent;
    border-top-color: #000;
    border-bottom: 0;
    margin-right: 3px;
}

.combo select {
    flex: 1;
    min-width: 0;
    padding: 0 2px;
    border: 0;
    background: none;
    appearance: none;
}

.combo.off {
    width: 57px;
    border: 1px solid #aca899;
    background: #f5f4ea;
}

.combo.off::after {
    border-top-color: #aca899;
}

.canvas {
    flex: 1;
    background: #000;
    overflow: hidden;
}

.canvas svg {
    display: block;
}

/* parameter dialog */
.dialog {
    position: absolute;
    left: 366px;
    top: 166px;
    right: 0;
    border: solid #0847d8;
    border-width: 0 0 4px 4px;
    border-radius: 7px 0 0 0;
    background: #ece9d8;
    overflow: hidden;
}

.dialog header {
    display: flex;
    align-items: center;
    gap: 4px;
    height: 29px;
    margin-left: -4px;
    padding: 3px 6px 0;
    background: linear-gradient(#0a5be0, #3a94ff 10%, #0558e6 25%, #0153e2 60%, #0668ff 90%, #0348cb);
}

.dialog h1 {
    margin: 0;
    color: #fff;
    font: bold 14px/16px "Noto Sans CJK SC", sans-serif;
    text-shadow: 1px 1px #0f1089;
}

.dialog-body {
    display: flex;
    border-top: 2px solid #fff;
    border-bottom: 1px solid #aca899;
}

fieldset {
    flex: none;
    min-width: 0;
    margin: 0 1px 0 2px;
    padding: 0 1px 0 4px;
    border: 1px solid #d0d0bf;
    border-bottom: 0;
    border-radius: 4px 4px 0 0;
}

legend {
    margin-left: 2px;
    padding: 0 1px;
    color: #0046d5;
    line-height: 15px;
}

.picker {
    display: flex;
    gap: 7px;
}

.thumbs {
    display: grid;
    grid-template-columns: auto auto;
    gap: 6px 5px;
    padding: 4px 0;
}

.thumb {
    border: 2px solid;
    border-color: #fff #aca899 #aca899 #fff;
    background: #6d93a9;
}

.thumb svg {
    display: block;
}

.chosen {
    border-color: #0ff;
    position: relative;
}

.chosen svg {
    overflow: visible;
}

.thumb text {
    font-family: "Liberation Serif", "Noto Sans CJK SC", serif;
    fill: #2c2577;
    font-weight: 300;
}

.thumb .dim {
    fill: #fff;
    font-size: 11px;
}

.thumb .big {
    font-size: 17px;
}

.thumb .tiny text {
    fill: #fff;
    font-size: 8px;
}

.cap10 {
    font-size: 10px;
}

.cap14 {
    font-size: 14px;
}

.cap20 {
    font-size: 20px;
}

.thumb .formula {
    fill: #fff;
    font: 13px "Liberation Mono", monospace;
}

.olive {
    fill: none;
    stroke: #b6be4c;
}

.hatched {
    fill: url(#hatch);
    stroke: #c8d040;
}

.mark {
    fill: none;
    stroke: #e04848;
}

.dark {
    stroke: #c03434;
}

.scroll {
    width: 15px;
    display: flex;
    flex-direction: column;
    background: linear-gradient(90deg, #f3f1ec, #fefefb);
}

.scroll button {
    flex: none;
    height: 16px;
    justify-content: center;
    border: 1px solid #fff;
    border-radius: 2px;
    background: #c3d3fd;
    outline: 1px solid #b4c8f5;
    outline-offset: -1px;
}

.scroll .down {
    margin-top: auto;
}

.handle {
    height: 158px;
    margin-top: 1px;
    border: 1px solid #98b1e4;
    border-radius: 2px;
    background: repeating-linear-gradient(#eef4fe 0 1px, #8cb0f8 1px 2px) center / 7px 8px no-repeat, linear-gradient(90deg, #c9d8fc, #b9cbf9);
}

.preview {
    flex: 1;
    min-width: 0;
    display: flex;
    flex-direction: column;
    border-left: 1px solid #aca899;
}

.modes {
    display: flex;
    gap: 135px;
    height: 30px;
    padding-left: 171px;
    border-bottom: 1px solid #aca899;
    overflow: hidden;
}

.modes label {
    flex: none;
    display: flex;
    align-items: center;
    gap: 2px;
}

.modes input {
    appearance: none;
    width: 13px;
    height: 13px;
    border: 1px solid #1c5180;
    border-radius: 50%;
    background: #fff;
}

.modes input:checked {
    background: radial-gradient(#21a121 0 2px, #fff 3px);
}

.drawing {
    flex: 1;
    background: #000;
    overflow: hidden;
}

.drawing svg {
    display: block;
    shape-rendering: crispEdges;
}

.note {
    fill: #fff;
    font: 14px "Noto Sans CJK SC", sans-serif;
}

.measure {
    fill: #00f800;
    font: 12px "Liberation Mono", monospace;
}

.section-no {
    fill: #fff;
    font: 32px "Liberation Serif", serif;
}

.big-title {
    fill: #fff;
    font: 300 34px "Noto Sans CJK SC", sans-serif;
}

.dialog footer {
    display: flex;
    padding: 7px 0 4px 336px;
    border-top: 1px solid #fff;
}

.dialog footer button {
    width: 90px;
    height: 26px;
    justify-content: center;
    border: 1px solid #003c74;
    border-radius: 3px;
    background: linear-gradient(#fff, #ecebe5);
}
```
